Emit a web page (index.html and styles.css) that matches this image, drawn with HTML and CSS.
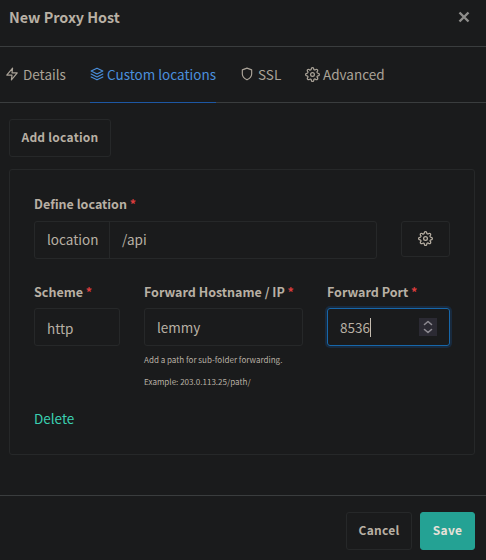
FILE: index.html
```html
<!DOCTYPE html>
<html lang="en">
<head>
<meta charset="utf-8">
<title>New Proxy Host</title>
<link rel="stylesheet" href="styles.css">
</head>
<body>
<svg class="sprite" aria-hidden="true">
  <symbol id="gear" viewBox="0 0 24 24">
    <circle cx="12" cy="12" r="3"/>
    <path d="M19.4 15a1.65 1.65 0 0 0 .33 1.82l.06.06a2 2 0 0 1 0 2.83 2 2 0 0 1-2.83 0l-.06-.06a1.65 1.65 0 0 0-1.82-.33 1.65 1.65 0 0 0-1 1.51V21a2 2 0 0 1-2 2 2 2 0 0 1-2-2v-.09A1.65 1.65 0 0 0 9 19.4a1.65 1.65 0 0 0-1.82.33l-.06.06a2 2 0 0 1-2.83 0 2 2 0 0 1 0-2.83l.06-.06a1.65 1.65 0 0 0 .33-1.82 1.65 1.65 0 0 0-1.51-1H3a2 2 0 0 1-2-2 2 2 0 0 1 2-2h.09A1.65 1.65 0 0 0 4.6 9a1.65 1.65 0 0 0-.33-1.82l-.06-.06a2 2 0 0 1 0-2.83 2 2 0 0 1 2.83 0l.06.06a1.65 1.65 0 0 0 1.82.33H9a1.65 1.65 0 0 0 1-1.51V3a2 2 0 0 1 2-2 2 2 0 0 1 2 2v.09a1.65 1.65 0 0 0 1 1.51 1.65 1.65 0 0 0 1.82-.33l.06-.06a2 2 0 0 1 2.83 0 2 2 0 0 1 0 2.83l-.06.06a1.65 1.65 0 0 0-.33 1.82V9a1.65 1.65 0 0 0 1.51 1H21a2 2 0 0 1 2 2 2 2 0 0 1-2 2h-.09a1.65 1.65 0 0 0-1.51 1z"/>
  </symbol>
</svg>
<div class="modal">
  <header class="modal-header">
    <h1 class="modal-title">New Proxy Host</h1>
    <svg class="close" viewBox="0 0 12 12"><path d="M1.500 1.500 10.500 10.500M10.500 1.500 1.500 10.500"/></svg>
  </header>
  <nav class="tabs">
    <a class="tab tab-details"><svg class="icon" viewBox="0 0 24 24"><path d="M13 2 3 14h9l-1 8 10-12h-9z"/></svg><span>Details</span></a>
    <a class="tab tab-locations active"><svg class="icon" viewBox="0 0 24 24"><path d="M12 2 2 7l10 5 10-5zM2 12l10 5 10-5M2 17l10 5 10-5"/></svg><span>Custom locations</span></a>
    <a class="tab tab-ssl"><svg class="icon" viewBox="0 0 24 24"><path d="M12 22s8-4 8-10V5l-8-3-8 3v7c0 6 8 10 8 10z"/></svg><span>SSL</span></a>
    <a class="tab tab-advanced"><svg class="icon"><use href="#gear"/></svg><span>Advanced</span></a>
  </nav>
  <main class="modal-body">
    <button class="btn btn-add">Add location</button>
    <section class="card">
      <div class="label">Define location <span class="req">*</span></div>
      <div class="location-row">
        <div class="input-group"><span class="addon">location</span><span class="value">/api</span></div>
        <button class="btn btn-gear"><svg class="icon"><use href="#gear"/></svg></button>
      </div>
      <div class="fields">
        <div class="field">
          <div class="label">Scheme <span class="req">*</span></div>
          <div class="control select">http</div>
        </div>
        <div class="field">
          <div class="label">Forward Hostname / IP <span class="req">*</span></div>
          <div class="control">lemmy</div>
          <div class="hint">Add a path for sub-folder forwarding.<br>Example: 203.0.113.25/path/</div>
        </div>
        <div class="field">
          <div class="label">Forward Port <span class="req">*</span></div>
          <div class="control focused"><span>8536</span><i class="caret"></i>
            <svg class="spinner" viewBox="0 0 18 18"><path d="M5.500 6.500 9 3.500l3.500 3M5.500 11.500 9 14.500l3.500-3"/></svg>
          </div>
        </div>
      </div>
      <a class="delete">Delete</a>
    </section>
  </main>
  <footer class="modal-footer">
    <button class="btn btn-cancel">Cancel</button>
    <button class="btn btn-save">Save</button>
  </footer>
</div>
</body>
</html>
```
FILE: styles.css
```css
* { box-sizing: border-box; }
body {
  margin: 0;
  background: #1a1b1c;
  color: #b8b0a4;
  font: 13.5px/22px "Noto Sans CJK SC", "Open Sans", sans-serif;
}
.sprite { display: none; }
svg { fill: none; stroke: currentColor; stroke-width: 2; stroke-linecap: round; stroke-linejoin: round; }
.icon { width: 14px; height: 14px; flex: none; }
.modal { width: 486px; height: 560px; display: flex; flex-direction: column; overflow: hidden; }
.modal-header {
  height: 47px;
  padding: 6px 16px 0 9px;
  border-bottom: 1px solid #3a3d3e;
  display: flex;
  justify-content: space-between;
}
.modal-title { margin: 0; font-size: 14.35px; line-height: 22px; font-weight: 700; }
.close { width: 12px; height: 12px; margin-top: 5px; color: #8e8d8b; stroke-width: 2.4; stroke-linecap: butt; }
.tabs { height: 56px; border-bottom: 1px solid #3a3d3e; display: flex; padding-left: 5px; }
.tab { height: 56px; padding-bottom: 2px; display: flex; align-items: center; gap: 4px; white-space: nowrap; color: #aaa398; }
.tab-details { width: 61px; margin-right: 24px; }
.tab-locations { width: 126px; margin-right: 24px; }
.tab-ssl { width: 41px; margin-right: 24px; }
.tab-advanced { gap: 3px; }
.tab-advanced .icon { width: 15px; height: 15px; }
.tab.active { gap: 3px; padding-bottom: 1px; color: #4a8fdc; border-bottom: 1px solid #1d57a3; }
.modal-body { flex: 1; padding: 16px 11px 0 9px; }
.btn {
  display: flex;
  align-items: center;
  justify-content: center;
  height: 38px;
  padding: 0 0 2px;
  border: 1px solid #262829;
  border-radius: 3px;
  background: transparent;
  color: #b8b0a4;
  font: 700 12px/22px "Noto Sans CJK SC", "Open Sans", sans-serif;
  letter-spacing: .25px;
}
.btn-add { width: 102px; }
.card {
  width: 466px;
  height: 286px;
  margin-top: 12px;
  padding: 24px 24px 0;
  border: 1px solid #262829;
  border-radius: 3px;
}
.label { height: 27px; line-height: 20px; font-size: 12.5px; font-weight: 700; white-space: nowrap; }
.req { color: #d83c3c; }
.location-row { display: flex; justify-content: space-between; width: 416px; height: 38px; }
.input-group { display: flex; width: 343px; border: 1px solid #262829; border-radius: 3px; line-height: 35px; }
.addon { width: 75px; padding-left: 12px; border-right: 1px solid #262829; }
.value { padding-left: 12px; }
.btn-gear { width: 49px; height: 36px; padding-bottom: 1px; }
.btn-gear .icon { width: 15px; height: 15px; }
.fields { display: grid; grid-template-columns: 86px 159px 123px; column-gap: 24px; margin-top: 23px; height: 110px; }
.field { min-width: 0; }
.field .label { height: 26px; }
.control { display: flex; align-items: center; height: 38px; padding: 0 12px; border: 1px solid #262829; border-radius: 3px; }
.select { padding-top: 1px; }
.focused { border-color: #1767aa; box-shadow: 0 0 0 2px #182a3e; }
.caret { width: 1px; height: 19px; background: #c4bcb0; }
.spinner { width: 18px; height: 18px; margin-left: auto; background: #2b2a33; color: #8d8a91; stroke-width: 1.6; }
.hint { margin-top: 3px; font-size: 8.050px; line-height: 22px; white-space: nowrap; }
.delete { display: block; margin-top: 15px; color: #3bd0b2; }
.modal-footer {
  height: 65px;
  padding: 16px 11px 0 0;
  border-top: 1px solid #3a3d3e;
  display: flex;
  justify-content: flex-end;
  gap: 8px;
}
.btn-cancel { width: 66px; }
.btn-save { width: 55px; border-color: #24a294; background: #24a294; color: #e6e1d9; }
```
